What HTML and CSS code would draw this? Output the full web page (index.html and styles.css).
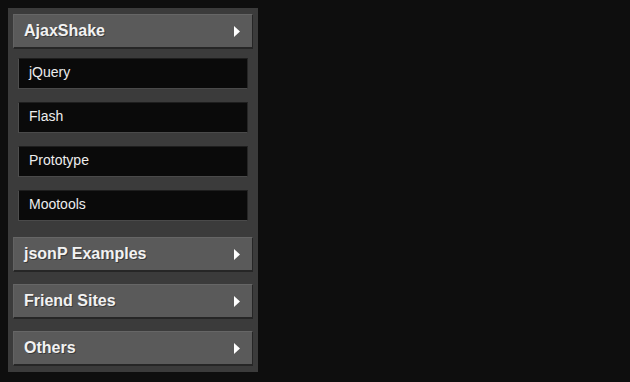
FILE: index.html
```html
<!DOCTYPE html>
<html>
<head>
<meta charset="utf-8">
<link rel="stylesheet" href="styles.css">
</head>
<body>
<div class="panel">
  <div class="section">
    <div class="head"><span>AjaxShake</span><svg class="arrow" width="6" height="11" viewBox="0 0 6 11"><path d="M0 0L6 5.5L0 11Z" fill="#fff"/></svg></div>
    <ul class="list">
      <li class="item">jQuery</li>
      <li class="item">Flash</li>
      <li class="item">Prototype</li>
      <li class="item">Mootools</li>
    </ul>
  </div>
  <div class="section">
    <div class="head"><span>jsonP Examples</span><svg class="arrow" width="6" height="11" viewBox="0 0 6 11"><path d="M0 0L6 5.5L0 11Z" fill="#fff"/></svg></div>
  </div>
  <div class="section">
    <div class="head"><span>Friend Sites</span><svg class="arrow" width="6" height="11" viewBox="0 0 6 11"><path d="M0 0L6 5.5L0 11Z" fill="#fff"/></svg></div>
  </div>
  <div class="section">
    <div class="head"><span>Others</span><svg class="arrow" width="6" height="11" viewBox="0 0 6 11"><path d="M0 0L6 5.5L0 11Z" fill="#fff"/></svg></div>
  </div>
</div>
</body>
</html>
```
FILE: styles.css
```css
html, body {
  margin: 0;
  padding: 0;
  background: #0e0e0e;
}
body {
  padding: 8px;
  font-family: "Liberation Sans", Arial, sans-serif;
}
.panel {
  width: 240px;
  padding: 6px 5px;
  background: #3b3b3b;
  display: flex;
  flex-direction: column;
  gap: 12px;
}
.section {
  display: flex;
  flex-direction: column;
}
.head {
  box-sizing: border-box;
  height: 35px;
  border-top: 1px solid #666;
  border-left: 1px solid #636363;
  border-right: 1px solid #262626;
  border-bottom: 2px solid #262626;
  background: #5a5a5a;
  padding: 0 12px 1px 10px;
  display: flex;
  align-items: center;
  justify-content: space-between;
  color: #f2f2f2;
  font-weight: bold;
  font-size: 16px;
  line-height: 31px;
  text-shadow: 1px 1px 0 #3a3a3a;
}
.arrow {
  display: block;
  margin-top: 1px;
}
.list {
  list-style: none;
  margin: 0;
  padding: 9px 5px 4px;
  display: flex;
  flex-direction: column;
  gap: 13px;
}
.item {
  box-sizing: border-box;
  height: 31px;
  background: #0a0a0a;
  border-top: 1px solid #1e1e1e;
  border-right: 1px solid #262626;
  border-bottom: 1px solid #4a4a4a;
  border-left: 1px solid #4e4e4e;
  padding: 0 10px 2px;
  color: #ededed;
  font-size: 14px;
  line-height: 27px;
}
```
